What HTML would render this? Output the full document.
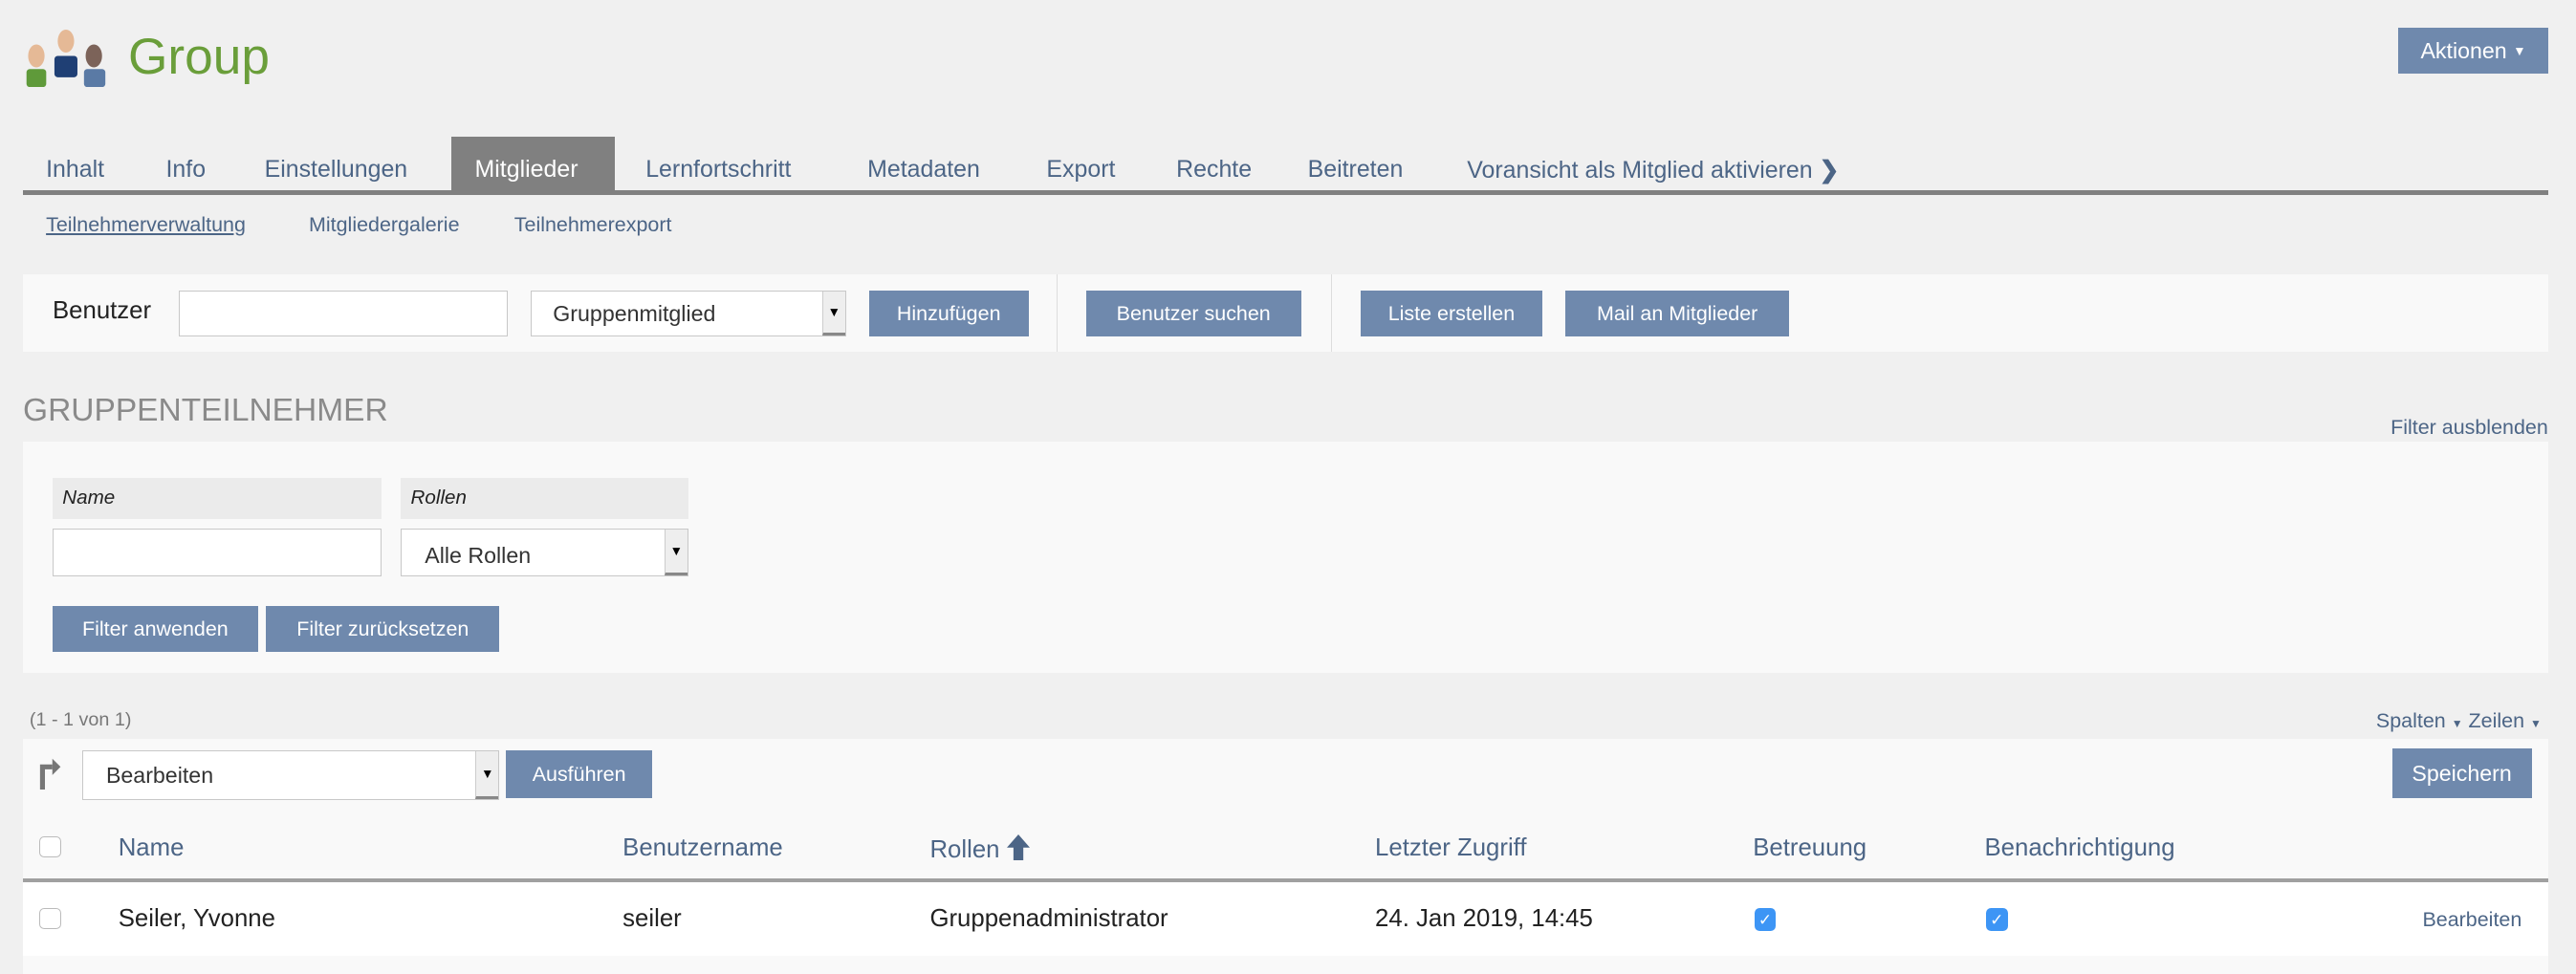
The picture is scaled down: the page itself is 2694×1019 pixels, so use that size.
<!DOCTYPE html>
<html><head><meta charset="utf-8"><style>
html,body{margin:0;padding:0;background:#f0f0f0;overflow:hidden}
#w{position:relative;width:1568px;height:593px;zoom:1.71811;font-family:"Liberation Sans",sans-serif;color:#222}
.a{position:absolute;white-space:nowrap}
.btn{position:absolute;background:#6f89ad;color:#fff;font-size:12.5px;display:flex;align-items:center;justify-content:center}
.lnk{color:#4c6586}
.inp{position:absolute;background:#fff;border:1px solid #c8c8c8;box-sizing:border-box}
.sel{position:absolute;background:#fff;border:1px solid #c8c8c8;box-sizing:border-box;font-size:13.5px;color:#333}
.sel .ar{position:absolute;right:0;top:0;bottom:0;width:14px;background:#eee;border-left:1px solid #ccc;border-bottom:2px solid #888;box-sizing:border-box;font-size:8px;display:flex;align-items:center;justify-content:center;color:#000}
.tab{position:absolute;top:95px;font-size:14.5px;color:#4c6586}
.th{position:absolute;top:508px;font-size:15px;color:#4c6586}
.td{position:absolute;top:551px;font-size:15px;color:#222}
.cb{position:absolute;width:13px;height:13px;border:1px solid #bbb;border-radius:3px;background:#fff;box-sizing:border-box}
.cbc{position:absolute;width:13px;height:14px;border-radius:3px;background:#3d95f5;color:#fff;font-size:10px;line-height:14px;text-align:center}
</style></head><body><div id="w">
<svg class="a" style="left:15px;top:18px" width="50" height="35" viewBox="0 0 50 35">
<ellipse cx="7" cy="16" rx="5" ry="7" fill="#e5b996"/><rect x="1" y="24" width="12" height="11" fill="#5f9a3a" rx="2"/>
<ellipse cx="25" cy="7" rx="5" ry="7" fill="#e5b996"/><rect x="18" y="16" width="14" height="13" fill="#1f3f74" rx="2"/>
<ellipse cx="42" cy="16" rx="5" ry="7" fill="#7c6359"/><rect x="36" y="24" width="13" height="11" fill="#5a7aa5" rx="2"/>
</svg>
<div class="a" style="left:78px;top:17px;font-size:31px;color:#6a9e3a">Group</div>
<div class="btn" style="left:1460px;top:17px;width:91px;height:28px;font-size:13.5px">Aktionen&nbsp;<span style="font-size:8px">▼</span></div>

<div class="a" style="left:275px;top:83px;width:99px;height:34px;background:#808080"></div>
<div class="a" style="left:14px;top:116px;width:1537px;height:3px;background:#808080"></div>
<div class="tab" style="left:28px">Inhalt</div>
<div class="tab" style="left:101px">Info</div>
<div class="tab" style="left:161px">Einstellungen</div>
<div class="tab" style="left:289px;color:#fff">Mitglieder</div>
<div class="tab" style="left:393px">Lernfortschritt</div>
<div class="tab" style="left:528px">Metadaten</div>
<div class="tab" style="left:637px">Export</div>
<div class="tab" style="left:716px">Rechte</div>
<div class="tab" style="left:796px">Beitreten</div>
<div class="tab" style="left:893px">Voransicht als Mitglied aktivieren <b style="color:#4c6586">❯</b></div>

<div class="a lnk" style="left:28px;top:130px;font-size:12.5px;text-decoration:underline">Teilnehmerverwaltung</div>
<div class="a lnk" style="left:188px;top:130px;font-size:12.5px">Mitgliedergalerie</div>
<div class="a lnk" style="left:313px;top:130px;font-size:12.5px">Teilnehmerexport</div>

<div class="a" style="left:14px;top:167px;width:1537px;height:47px;background:#f9f9f9"></div>
<div class="a" style="left:32px;top:181px;font-size:15px">Benutzer</div>
<div class="inp" style="left:109px;top:177px;width:200px;height:28px"></div>
<div class="sel" style="left:323px;top:177px;width:192px;height:28px"><span style="position:absolute;left:13px;top:6px">Gruppenmitglied</span><div class="ar">▼</div></div>
<div class="btn" style="left:529px;top:177px;width:97px;height:28px">Hinzufügen</div>
<div class="a" style="left:643px;top:167px;width:1px;height:47px;background:#ddd"></div>
<div class="btn" style="left:661px;top:177px;width:131px;height:28px">Benutzer suchen</div>
<div class="a" style="left:810px;top:167px;width:1px;height:47px;background:#ddd"></div>
<div class="btn" style="left:828px;top:177px;width:111px;height:28px">Liste erstellen</div>
<div class="btn" style="left:953px;top:177px;width:136px;height:28px">Mail an Mitglieder</div>

<div class="a" style="left:14px;top:239px;font-size:19.5px;color:#8a8a8a">GRUPPENTEILNEHMER</div>
<div class="a lnk" style="right:17px;top:253px;font-size:12.5px">Filter ausblenden</div>

<div class="a" style="left:14px;top:269px;width:1537px;height:141px;background:#f9f9f9"></div>
<div class="a" style="left:32px;top:291px;width:200px;height:25px;background:#ebebeb;font-size:12px;font-style:italic;line-height:25px;text-indent:6px">Name</div>
<div class="a" style="left:244px;top:291px;width:175px;height:25px;background:#ebebeb;font-size:12px;font-style:italic;line-height:25px;text-indent:6px">Rollen</div>
<div class="inp" style="left:32px;top:322px;width:200px;height:29px"></div>
<div class="sel" style="left:244px;top:322px;width:175px;height:29px"><span style="position:absolute;left:14px;top:8px">Alle Rollen</span><div class="ar">▼</div></div>
<div class="btn" style="left:32px;top:369px;width:125px;height:28px">Filter anwenden</div>
<div class="btn" style="left:162px;top:369px;width:142px;height:28px">Filter zurücksetzen</div>

<div class="a" style="left:18px;top:432px;font-size:11.5px;color:#777">(1 - 1 von 1)</div>
<div class="a lnk" style="right:21px;top:432px;font-size:12.5px">Spalten <span style="font-size:7px">▼</span> Zeilen <span style="font-size:7px">▼</span></div>

<div class="a" style="left:14px;top:450px;width:1537px;height:143px;background:#f9f9f9"></div>
<svg class="a" style="left:24px;top:461px" width="14" height="20" viewBox="0 0 14 20"><path d="M2 20V6h6" stroke="#777" stroke-width="3" fill="none"/><path d="M8 1l5 5-5 5z" fill="#777"/></svg>
<div class="sel" style="left:50px;top:457px;width:254px;height:30px"><span style="position:absolute;left:14px;top:7px">Bearbeiten</span><div class="ar">▼</div></div>
<div class="btn" style="left:308px;top:457px;width:89px;height:29px">Ausführen</div>
<div class="btn" style="left:1456px;top:456px;width:85px;height:30px;font-size:13.5px">Speichern</div>

<div class="a" style="left:14px;top:535px;width:1537px;height:2px;background:#a0a0a0"></div>
<div class="a" style="left:14px;top:537px;width:1537px;height:45px;background:#fff"></div>
<div class="cb" style="left:24px;top:509px"></div>
<div class="th" style="left:72px">Name</div>
<div class="th" style="left:379px">Benutzername</div>
<div class="th" style="left:566px">Rollen <svg width="14" height="16" viewBox="0 0 14 16" style="vertical-align:-2px"><path d="M7 0L14 8H10V16H4V8H0Z" fill="#4c6586"/></svg></div>
<div class="th" style="left:837px">Letzter Zugriff</div>
<div class="th" style="left:1067px">Betreuung</div>
<div class="th" style="left:1208px">Benachrichtigung</div>

<div class="cb" style="left:24px;top:553px"></div>
<div class="td" style="left:72px">Seiler, Yvonne</div>
<div class="td" style="left:379px">seiler</div>
<div class="td" style="left:566px">Gruppenadministrator</div>
<div class="td" style="left:837px">24. Jan 2019, 14:45</div>
<div class="cbc" style="left:1068px;top:553px">✓</div>
<div class="cbc" style="left:1209px;top:553px">✓</div>
<div class="a lnk" style="right:33px;top:553px;font-size:12.5px">Bearbeiten</div>
</div></body></html>
